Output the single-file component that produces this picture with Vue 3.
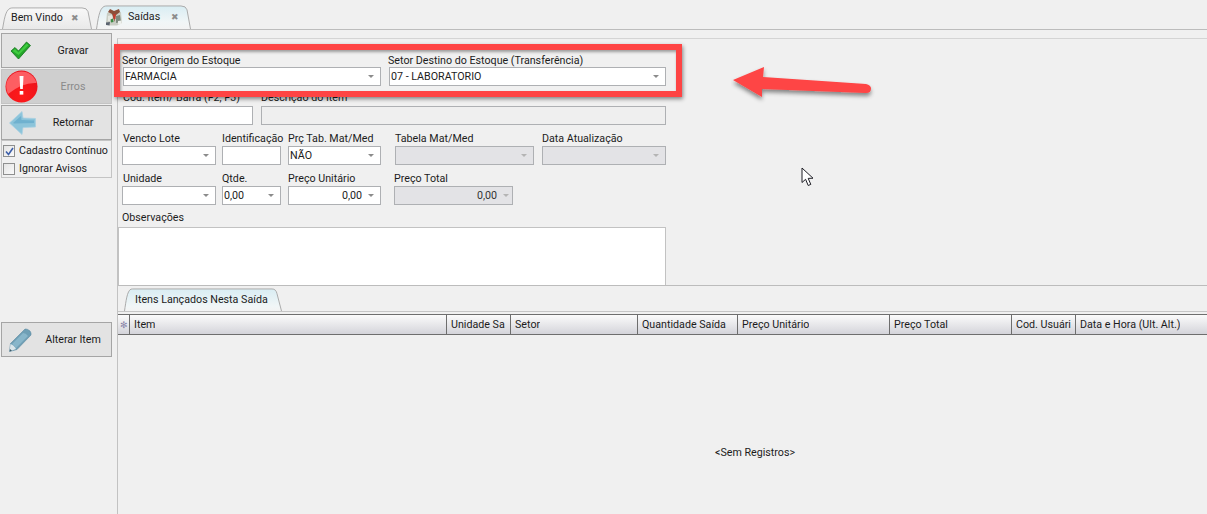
<script setup>
const columns = [
  { label: '', width: 12, marker: true },
  { label: 'Item', width: 317 },
  { label: 'Unidade Sa', width: 64 },
  { label: 'Setor', width: 127 },
  { label: 'Quantidade Saída', width: 100 },
  { label: 'Preço Unitário', width: 152 },
  { label: 'Preço Total', width: 122 },
  { label: 'Cod. Usuári', width: 64 },
  { label: 'Data e Hora (Ult. Alt.)', width: 132 }
]
</script>

<template>
  <div class="app">
    <header class="tabs">
      <div class="tab tab-idle">
        <svg class="tab-shape" viewBox="0 0 90 24" preserveAspectRatio="none">
          <path d="M0.5 24 C2 16 3 4 8 1.5 Q9 1 11 1 L80 1 Q85 1 86 5 L89.5 24" fill="url(#idle)" stroke="#a9a9a9" />
          <defs>
            <linearGradient id="idle" x1="0" y1="0" x2="0" y2="1">
              <stop offset="0" stop-color="#f8f8f8" /><stop offset="1" stop-color="#e9e9e9" />
            </linearGradient>
          </defs>
        </svg>
        <span class="tab-text">Bem Vindo</span>
        <span class="tab-x">✖</span>
      </div>
      <div class="tab tab-active">
        <svg class="tab-shape" viewBox="0 0 95 25" preserveAspectRatio="none">
          <path d="M0.5 25 C2 16 3 4 8 1.5 Q9 1 11 1 L85 1 Q90 1 91 5 L94.5 25" fill="url(#active)" stroke="#a9a9a9" />
          <defs>
            <linearGradient id="active" x1="0" y1="0" x2="0" y2="1">
              <stop offset="0" stop-color="#d9edf3" /><stop offset="0.7" stop-color="#f1f6f7" /><stop offset="1" stop-color="#f3f3f3" />
            </linearGradient>
          </defs>
        </svg>
        <svg class="crest" viewBox="0 0 18 18">
          <path d="M1 15 L2 5 L6 3 L9 5 L12 3 L16 4 L17 15 L12 17.5 L4 17.5 Z" fill="#c9cdc4" />
          <path d="M3 4 L5 1 L9 3 L14 1 L15 4 L11 7 L10 10 L9.5 14 L8 9 L7 6 Z" fill="#8c4f3a" />
          <path d="M3 8 L7 7 L8 13 L3 13 Z" fill="#e4e7e1" />
          <path d="M11 8 L15 7 L16 14 L11 15 Z" fill="#7f8a7f" />
          <path d="M5.5 11.5 L8 10.5 L8.5 14 L6 14.5 Z" fill="#3c8a43" />
          <path d="M8.5 6 L10.5 6 L10.5 11 L8.5 11 Z" fill="#c73a2c" />
          <path d="M1 14.5 L5 14 L4.5 17.5 L1 17 Z" fill="#5b6470" />
          <path d="M13 13 L16.5 12.5 L16.5 16 L13 16.5 Z" fill="#eef0ec" />
        </svg>
        <span class="tab-text">Saídas</span>
        <span class="tab-x">✖</span>
      </div>
    </header>

    <div class="workspace">
      <aside class="sidebar">
        <button class="action">
          <span class="action-icon">
            <svg width="21" height="19" viewBox="0 0 21 19">
              <path d="M1 10 L5 6.5 L8.5 10 L16.5 1 L20.5 4.5 L8.5 18 Z" fill="#25a52b" stroke="#11731a" stroke-width="0.8" stroke-linejoin="round" />
              <path d="M2.5 10 L5 8 L8.5 11.6 L16.6 2.6 L18.5 4.2 L8.6 14 Z" fill="#3fcc3f" />
            </svg>
          </span>
          <span class="action-text">Gravar</span>
        </button>
        <button class="action action-error">
          <span class="action-icon">
            <svg class="icon-error" width="33" height="33" viewBox="0 0 33 33">
              <defs>
                <radialGradient id="redball" cx="0.5" cy="0.8" r="0.8">
                  <stop offset="0" stop-color="#ff1a1a" /><stop offset="1" stop-color="#e8121c" />
                </radialGradient>
              </defs>
              <circle cx="16.5" cy="16.5" r="16" fill="url(#redball)" />
              <path d="M1.5 13 A15.5 15.5 0 0 1 31.5 13 Q18 12 3 24 Q0.5 18 1.5 13 Z" fill="#ff6b6f" opacity="0.85" />
              <path d="M14.5 6 H18.5 L17.8 19 H15.2 Z" fill="#fff" />
              <rect x="14.7" y="21" width="3.6" height="3.6" fill="#fff" />
            </svg>
          </span>
          <span class="action-text">Erros</span>
        </button>
        <button class="action">
          <span class="action-icon">
            <svg class="icon-back" width="27" height="24" viewBox="0 0 27 24">
              <path d="M0.5 12 L13 0.5 L14 7 L26.5 7.5 L26.5 16 L14 16.5 L13 23.5 Z" fill="#8cc4da" stroke="#a9d1e2" stroke-width="0.8" stroke-linejoin="round" />
              <path d="M4 12 L12 5 L12.5 9 L25 9.5 L25 12 L5 12.5 Z" fill="#6fb1cf" />
            </svg>
          </span>
          <span class="action-text">Retornar</span>
        </button>

        <div class="options">
          <label class="option">
            <span class="check check-on">
              <svg width="9" height="9" viewBox="0 0 9 9"><path d="M1 4.5 L3.5 7.5 L8 1" fill="none" stroke="#3c5ea8" stroke-width="1.6" /></svg>
            </span>
            Cadastro Contínuo
          </label>
          <label class="option">
            <span class="check"></span>
            Ignorar Avisos
          </label>
        </div>

        <button class="action action-edit">
          <span class="action-icon">
            <svg width="24" height="24" viewBox="0 0 24 24">
              <path d="M17 1 Q19 0.5 22 3 Q23.5 5 23 7 L9 21.5 L1.5 23.5 L2.5 15.5 Z" fill="#6f9fb5" stroke="#5a8aa1" stroke-width="0.6" />
              <path d="M15 5 Q18 5 20 8 L8 20 Q6 17 4 16 Z" fill="#88b6ca" />
              <path d="M2.5 16 Q6 17 8 21 L1.5 23.5 Z" fill="#dbe6ea" />
              <path d="M1.5 23.5 L2 21 L4 22.8 Z" fill="#3d5a68" />
            </svg>
          </span>
          <span class="action-text">Alterar Item</span>
        </button>
      </aside>

      <main class="content">
        <section class="form">
          <div class="row row-1">
            <div class="field f-origin">
              <span class="label">Setor Origem do Estoque</span>
              <div class="combo"><span class="value">FARMACIA</span><i class="caret"></i></div>
            </div>
            <div class="field f-dest">
              <span class="label">Setor Destino do Estoque (Transferência)</span>
              <div class="combo"><span class="value">07 - LABORATORIO</span><i class="caret"></i></div>
            </div>
          </div>

          <div class="row row-2">
            <div class="field f-code">
              <span class="label">Cod. Item/ Barra (F2, F3)</span>
              <div class="combo"></div>
            </div>
            <div class="field f-desc">
              <span class="label">Descrição do Item</span>
              <div class="combo disabled"></div>
            </div>
          </div>

          <div class="row row-3">
            <div class="field f-lote">
              <span class="label">Vencto Lote</span>
              <div class="combo"><i class="caret"></i></div>
            </div>
            <div class="field f-ident">
              <span class="label">Identificação</span>
              <div class="combo"></div>
            </div>
            <div class="field f-prc">
              <span class="label">Prç Tab. Mat/Med</span>
              <div class="combo"><span class="value">NÃO</span><i class="caret"></i></div>
            </div>
            <div class="field f-tab">
              <span class="label">Tabela Mat/Med</span>
              <div class="combo disabled"><i class="caret"></i></div>
            </div>
            <div class="field f-data">
              <span class="label">Data Atualização</span>
              <div class="combo disabled"><i class="caret"></i></div>
            </div>
          </div>

          <div class="row row-4">
            <div class="field f-lote">
              <span class="label">Unidade</span>
              <div class="combo"><i class="caret"></i></div>
            </div>
            <div class="field f-ident">
              <span class="label">Qtde.</span>
              <div class="combo"><span class="value">0,00</span><i class="caret"></i></div>
            </div>
            <div class="field f-prc">
              <span class="label">Preço Unitário</span>
              <div class="combo"><span class="value right">0,00</span><i class="caret"></i></div>
            </div>
            <div class="field f-total">
              <span class="label">Preço Total</span>
              <div class="combo disabled"><span class="value right">0,00</span><i class="caret"></i></div>
            </div>
          </div>

          <div class="row-obs">
            <span class="label">Observações</span>
            <div class="memo"></div>
          </div>

          <div class="annotation-box"></div>
          <svg class="annotation-arrow" width="150" height="50" viewBox="0 0 150 50">
            <defs>
              <filter id="arrow-shadow" x="-10%" y="-30%" width="120%" height="170%">
                <feDropShadow dx="0" dy="3" stdDeviation="2" flood-color="#000" flood-opacity="0.45" />
              </filter>
            </defs>
            <path d="M2 20 L33 7 L32 17 L135 24 Q140 25 140 28.5 Q140 33 135 33 L31 29 L31 37 Z" fill="#fe4444" filter="url(#arrow-shadow)" />
          </svg>
          <svg class="cursor" width="14" height="21" viewBox="0 0 14 21">
            <path d="M1 1 L1 15.5 L4.6 12.3 L7.2 18.5 L9.8 17.4 L7.2 11.4 L12 11.2 Z" fill="#fff" stroke="#1d1d24" stroke-width="1" stroke-linejoin="round" />
          </svg>
        </section>

        <section class="items">
          <div class="items-tabs">
            <div class="items-tab">
              <svg class="tab-shape" viewBox="0 0 158 24" preserveAspectRatio="none">
                <path d="M0.5 24 C2 14 3 3 7 1.2 Q8 1 10 1 L148 1 Q152 1 153 6 L157.5 24" fill="url(#active2)" stroke="#a9a9a9" />
                <defs>
                  <linearGradient id="active2" x1="0" y1="0" x2="0" y2="1">
                    <stop offset="0" stop-color="#d9edf3" /><stop offset="0.8" stop-color="#f1f6f7" /><stop offset="1" stop-color="#f3f3f3" />
                  </linearGradient>
                </defs>
              </svg>
              <span class="tab-text">Itens Lançados Nesta Saída</span>
            </div>
          </div>
          <div class="grid-head">
            <div v-for="col in columns" :key="col.label" class="col" :style="{ width: col.width + 'px' }">
              <span v-if="col.marker" class="marker">✻</span>
              <span v-else class="col-text">{{ col.label }}</span>
            </div>
          </div>
          <div class="grid-body"><span>&lt;Sem Registros&gt;</span></div>
        </section>
      </main>
    </div>
  </div>
</template>

<style>
html, body { margin: 0; background: #f0f0f0; overflow: hidden; }
</style>

<style scoped>
.app {
  width: 1207px;
  height: 514px;
  overflow: hidden;
  background: #f0f0f0;
  color: #1c1c1c;
  font: 10.7px/14px Roboto, "Liberation Sans", Arial, sans-serif;
  display: flex;
  flex-direction: column;
}
.tabs {
  height: 29px;
  flex: none;
  display: flex;
  align-items: flex-end;
  padding-left: 2px;
  gap: 4px;
  border-bottom: 1px solid #bcbcbc;
  box-sizing: content-box;
}
.tab { position: relative; display: flex; align-items: center; box-sizing: border-box; }
.tab-idle { width: 90px; height: 22px; padding-left: 9px; }
.tab-active { width: 95px; height: 24px; padding-left: 9px; }
.tab-shape { position: absolute; inset: 0; width: 100%; height: 100%; }
.tab-text { position: relative; white-space: nowrap; }
.tab-x { position: relative; margin-left: 8px; font-size: 9px; color: #8d8d8d; }
.tab-active .tab-text { margin-left: 5px; }
.tab-active .tab-x { margin-left: 11px; }
.crest { position: relative; width: 18px; height: 18px; }

.workspace { flex: 1; display: flex; min-height: 0; }
.sidebar {
  width: 117px;
  flex: none;
  box-sizing: border-box;
  padding: 3px 0 0 1px;
  display: flex;
  flex-direction: column;
  align-items: flex-start;
  gap: 1px;
}
.action {
  width: 111px;
  height: 35px;
  display: flex;
  align-items: center;
  padding: 0;
  border: 1px solid #a5a5a5;
  background: #e3e3e3;
  font: inherit;
  color: #1c1c1c;
  flex: none;
}
.action-icon { width: 36px; flex: none; display: flex; justify-content: center; align-items: center; }
.action-text { flex: 1; text-align: center; padding-right: 3px; }
.action-error { background: #cfcfcf; border-color: #c4c4c4; color: #8a8a8a; }
.icon-error { margin-left: 2px; }
.icon-back { margin-left: 5px; }
.options {
  width: 111px;
  height: 38px;
  box-sizing: border-box;
  margin-top: -1px;
  border: 1px solid #c4c4c4;
  padding: 3px 0 0 1px;
  display: flex;
  flex-direction: column;
  gap: 4px;
}
.option { display: flex; align-items: center; gap: 4px; white-space: nowrap; height: 14px; }
.check {
  width: 10px;
  height: 10px;
  border: 1px solid #8e8f8f;
  background: linear-gradient(135deg, #e4e4e4, #fafafa);
  display: flex;
  align-items: center;
  justify-content: center;
  flex: none;
}
.action-edit { margin-top: 143px; }

.content {
  flex: 1;
  min-width: 0;
  margin-top: 8px;
  border-top: 1px solid #d4d4d4;
  border-left: 1px solid #c2c2c2;
  display: flex;
  flex-direction: column;
}
.form {
  position: relative;
  height: 247px;
  flex: none;
  box-sizing: border-box;
  padding-top: 14px;
  border-bottom: 1px solid #bcbcbc;
}
.row { display: flex; align-items: flex-start; }
.row-1 { padding-left: 5px; }
.row-2 { padding-left: 5px; margin-top: 4px; }
.row-3 { padding-left: 4px; margin-top: 6px; }
.row-4 { padding-left: 4px; margin-top: 6px; }
.row-2 .label { margin-bottom: 2px; }
.row-3 .label { margin-bottom: 1px; }
.row-4 .label { margin-bottom: 1px; }
.field { display: flex; flex-direction: column; flex: none; }
.label { display: block; height: 14px; line-height: 16px; white-space: nowrap; }
.row-1 .label { margin-left: -1px; }
.f-origin { width: 258px; }
.f-dest { width: 277px; margin-left: 8px; }
.f-code { width: 130px; }
.f-desc { width: 405px; margin-left: 8px; }
.f-lote { width: 94px; }
.f-ident { width: 59px; margin-left: 6px; }
.f-prc { width: 93px; margin-left: 7px; }
.f-tab { width: 139px; margin-left: 14px; }
.f-data { width: 124px; margin-left: 8px; }
.f-total { width: 119px; margin-left: 13px; }
.f-lote .label { padding-left: 1px; }
.combo {
  height: 19px;
  box-sizing: border-box;
  border: 1px solid #aeb0b3;
  background: #fff;
  display: flex;
  align-items: center;
  padding: 0 1px;
}
.combo.disabled { background: #e3e3e6; }
.row-2 .combo.disabled { background: #efefef; }
.value { flex: 1; white-space: nowrap; padding-left: 0; }
.value.right { text-align: right; padding-right: 6px; }
.disabled .value { color: #333; }
.caret {
  flex: none;
  margin-left: auto;
  margin-right: 5px;
  width: 0;
  height: 0;
  border-left: 3.5px solid transparent;
  border-right: 3.5px solid transparent;
  border-top: 3.5px solid #8b8b8b;
}
.disabled .caret { border-top-color: #b4b4b4; }
.f-total .caret { margin-right: 2px; }
.row-obs { margin-top: 5px; }
.row-obs .label { padding-left: 4px; }
.memo {
  width: 548px;
  height: 58px;
  margin-top: 3px;
  box-sizing: border-box;
  background: #fff;
  border: 1px solid #c2c2c2;
  border-bottom: 0;
}
.annotation-box {
  position: absolute;
  left: -4px;
  top: 5px;
  width: 568px;
  height: 53px;
  box-sizing: border-box;
  border: 6px solid #fe4444;
  box-shadow: 1px 2px 4px rgba(0, 0, 0, 0.45), inset 1px 2px 3px rgba(0, 0, 0, 0.35);
}
.annotation-arrow { position: absolute; left: 613px; top: 21px; }
.cursor { position: absolute; left: 683px; top: 128px; }

.items { flex: 1; display: flex; flex-direction: column; min-height: 0; }
.items-tabs {
  height: 25px;
  flex: none;
  padding-left: 6px;
  display: flex;
  align-items: flex-end;
  border-bottom: 1px solid #c6c6c6;
}
.items-tab {
  position: relative;
  width: 158px;
  height: 23px;
  display: flex;
  align-items: center;
  padding-left: 11px;
  box-sizing: border-box;
}
.grid-head {
  margin-top: 2px;
  height: 21px;
  flex: none;
  display: flex;
  box-sizing: border-box;
  border-top: 1px solid #6e6e6e;
  border-bottom: 1px solid #6e6e6e;
  background: linear-gradient(#fbfbfb, #d4d4da);
}
.col {
  flex: none;
  box-sizing: border-box;
  border-right: 1px solid #6e6e6e;
  padding-left: 4px;
  padding-right: 1px;
  overflow: hidden;
  white-space: nowrap;
  display: flex;
  align-items: center;
}
.col:first-child { padding: 0; justify-content: center; }
.col:last-child { border-right: 0; }
.col-text { overflow: hidden; }
.marker { font-size: 9px; color: #8783a8; }
.grid-body { flex: 1; padding: 111px 0 0 597px; white-space: nowrap; }
</style>
